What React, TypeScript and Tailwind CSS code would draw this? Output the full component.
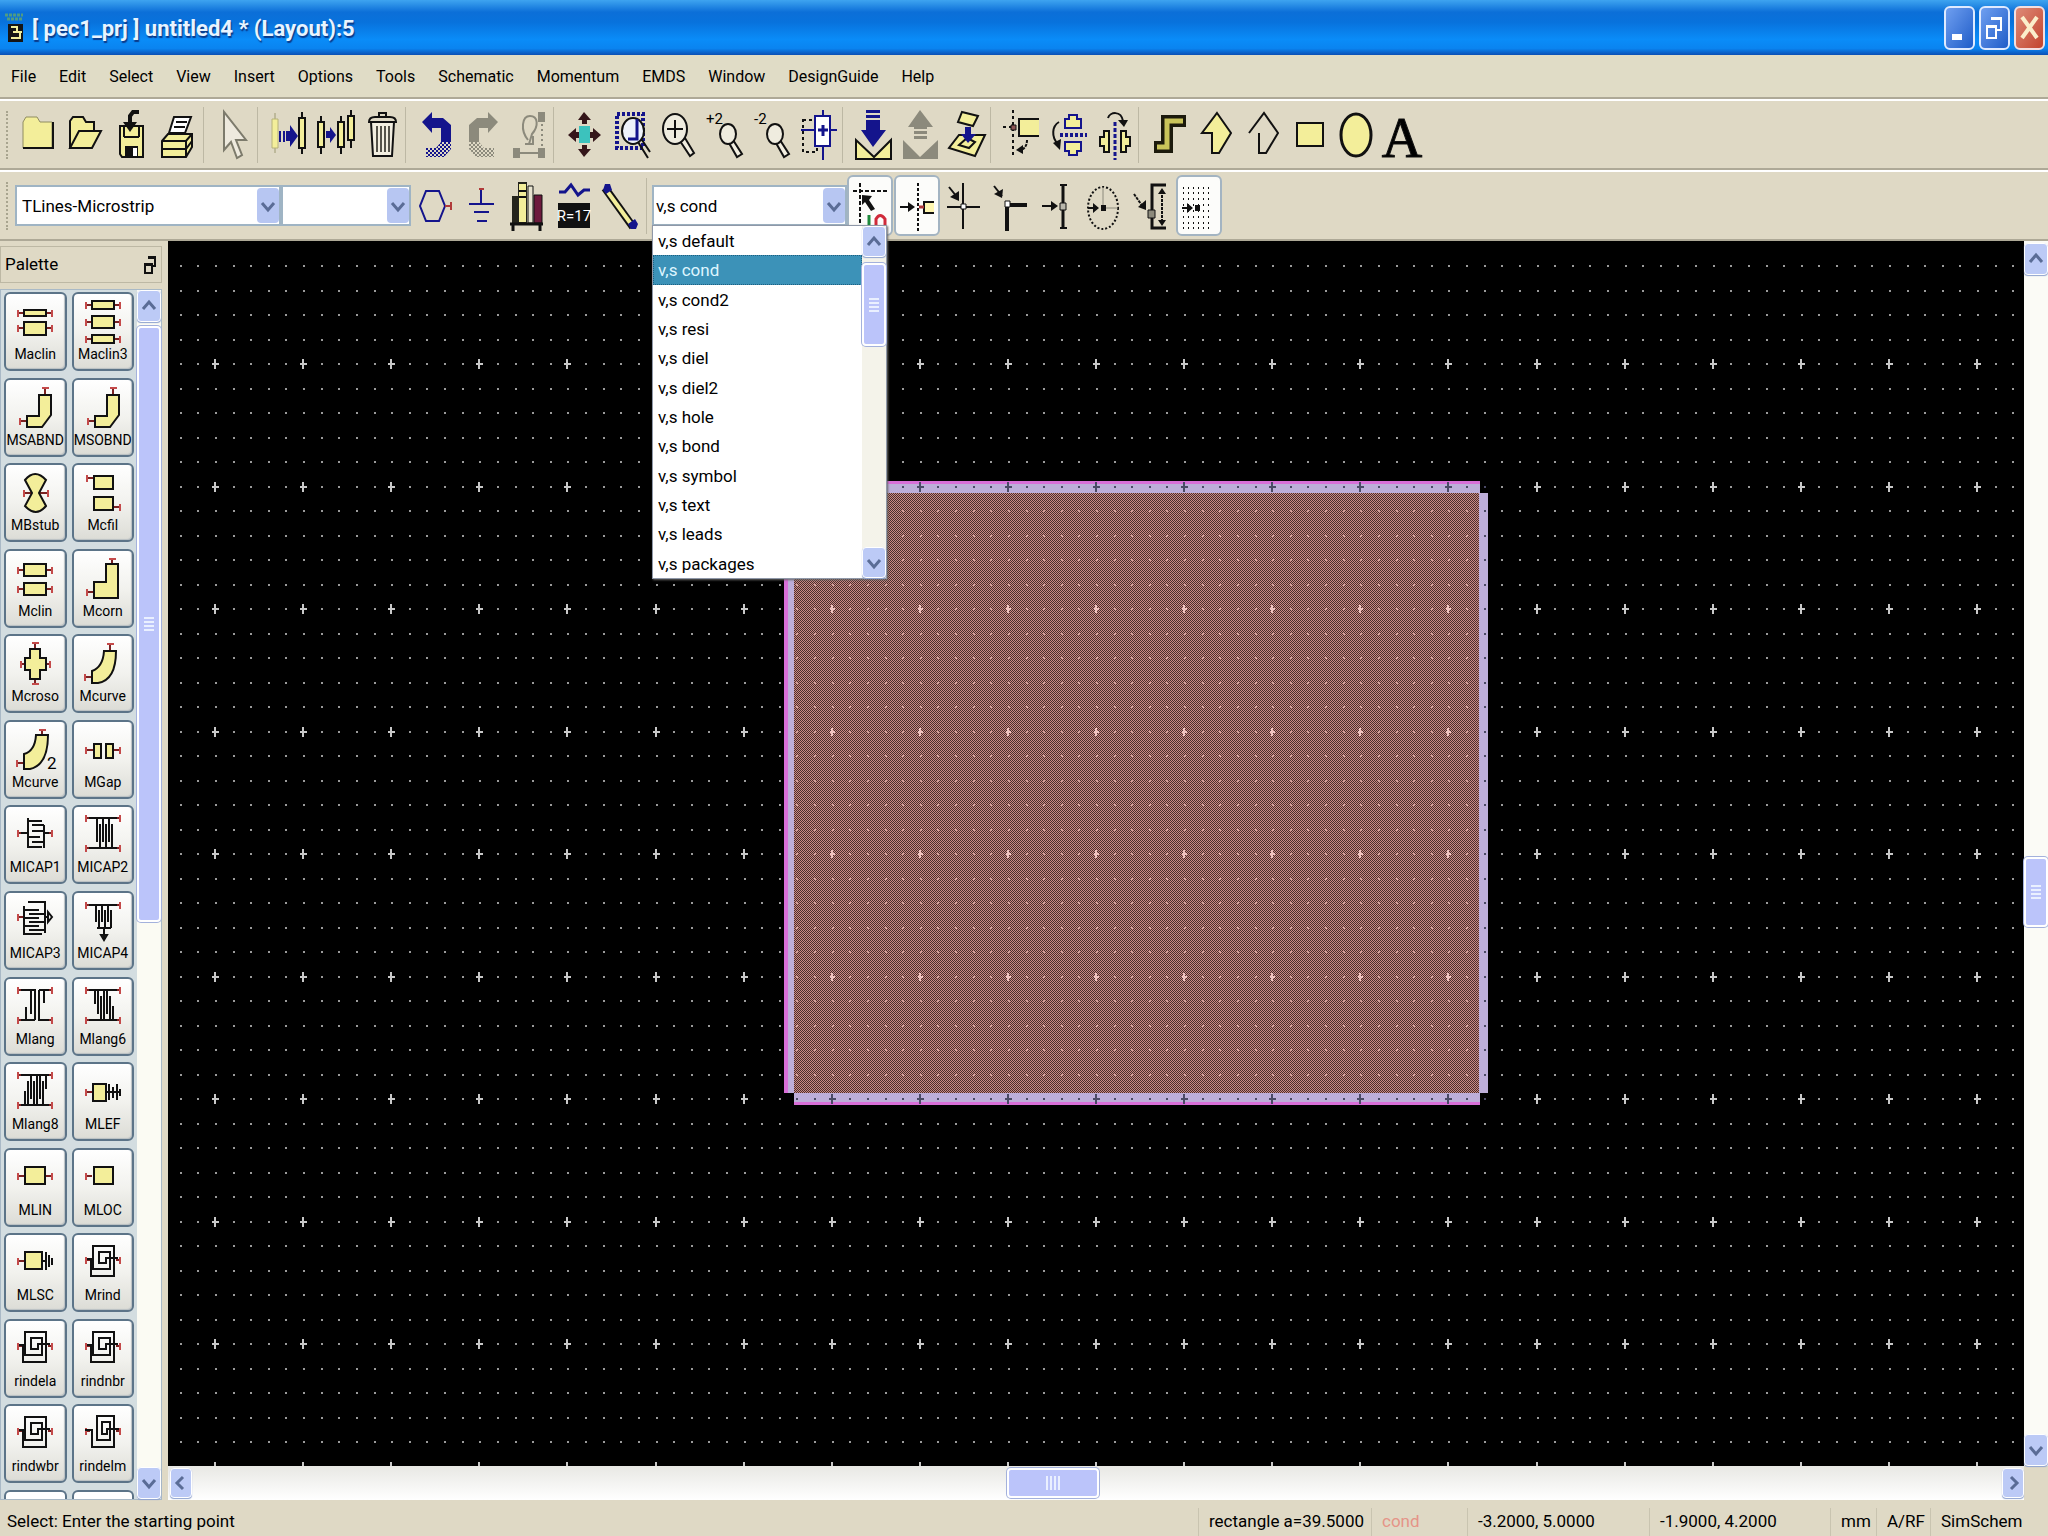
import type { ReactNode } from "react";
import clsx from "clsx";

const menus = [
  "File",
  "Edit",
  "Select",
  "View",
  "Insert",
  "Options",
  "Tools",
  "Schematic",
  "Momentum",
  "EMDS",
  "Window",
  "DesignGuide",
  "Help",
];

const layers = [
  "default",
  "cond",
  "cond2",
  "resi",
  "diel",
  "diel2",
  "hole",
  "bond",
  "symbol",
  "text",
  "leads",
  "packages",
];

const Y = "#f3ee9a";
const NAVY = "#14148c";
const GREY = "#8c8a7c";

/* ---------- main toolbar icons, drawn on a 40x50 grid ---------- */

const ink = { fill: "none", stroke: "#111", strokeWidth: 2 };

const mainGroups: { label: string; icon: ReactNode }[][] = [
  [
    {
      label: "New",
      icon: (
        <>
          <path d="M4 38V12l3-5h11l3 5h12v26z" fill={Y} stroke="#8f8c60" strokeWidth={1} />
          <path d="M4 38h30V12" {...ink} />
        </>
      ),
    },
    {
      label: "Open",
      icon: <path d="M4 38V11l3-4h10l3 5h8v9M4 38l9-17h22l-9 17z" {...ink} fill={Y} />,
    },
    {
      label: "Save",
      icon: (
        <>
          <path d="M7 16h23v31H9l-2-3z" {...ink} fill={Y} />
          <path d="M11 27h15M11 16v11M26 16v11" {...ink} />
          <path d="M12 36h13v11H12z" fill="#111" />
          <path d="M20 38h4v8h-4z" fill="#fff" />
          <path d="M26 2h-6l-3 4v8" {...ink} strokeWidth={4} />
          <path d="M10 12h14l-7 10z" fill="#111" />
        </>
      ),
    },
    {
      label: "Print",
      icon: (
        <>
          <path d="M2 31l6-7h24v13l-6 10H2z" {...ink} fill={Y} />
          <path d="M9 23l5-16h17l-6 16z" {...ink} fill="#fff" />
          <path d="M16 12h11M14 17h11M2 31h24l6-7M26 31v16M2 39h24l6-8" {...ink} />
        </>
      ),
    },
  ],
  [
    {
      label: "Select",
      icon: (
        <path
          d="M10 2v38l7-8 6 16 5-3-6-15h10z"
          fill="#eeeade"
          stroke="#7d7b6c"
          strokeWidth={2}
        />
      ),
    },
  ],
  [
    {
      label: "Copy",
      icon: (
        <>
          <path d="M7 3v40" stroke="#9b9870" strokeWidth={1} />
          <path d="M4 9h6v29H4z" fill={Y} stroke="#b6b27a" />
          <path d="M12 21v11M16 21v11" stroke={NAVY} strokeWidth={2} />
          <path d="M18 21h4v-6l8 11-8 11v-6h-4z" fill={NAVY} />
          <path d="M34 2v42" {...ink} />
          <path d="M31 8h6v30h-6z" {...ink} fill={Y} />
        </>
      ),
    },
    {
      label: "Move",
      icon: (
        <>
          <path d="M6 6v38M26 6v38M36 0v38" {...ink} />
          <path d="M3 12h6v25H3zM23 12h6v25h-6zM33 6h6v24h-6z" {...ink} fill={Y} />
          <path d="M11 21h4v-4l6 8-6 8v-5h-4z" fill={NAVY} />
        </>
      ),
    },
    {
      label: "Delete",
      icon: (
        <>
          <path d="M9 12h23l-2 34H11z" {...ink} fill="#f2eee0" />
          <path d="M7 12q0-5 6-5h15q6 0 6 5zM17 6V3h7v3" {...ink} />
          <path d="M15 16v26M19 16v26M23 16v26M27 16v26" stroke="#55534a" strokeWidth={2} />
        </>
      ),
    },
  ],
  [
    {
      label: "Undo",
      icon: (
        <>
          <path d="M6 12L16 2v6h11l8 7v17H25V18h-9v5z" fill={NAVY} />
          <path d="M25 32h10v7l-7 8H10v-9h10z" fill="url(#navyDots)" />
        </>
      ),
    },
    {
      label: "Redo",
      icon: (
        <>
          <path d="M35 12L25 2v6H14l-8 7v17h10V18h9v5z" fill={GREY} />
          <path d="M16 32H6v7l7 8h18v-9H21z" fill="url(#greyDots)" />
        </>
      ),
    },
    {
      label: "Rotate",
      icon: (
        <>
          <path d="M18 30c-8-10-6-24 2-24s9 10 2 18l-3 10M15 34h8v-8" fill="none" stroke={GREY} strokeWidth={2} />
          <path d="M28 2h7v10h-7zM3 38h7v10H3zM28 38h7v10h-7z" fill={GREY} />
          <path d="M10 43h18" stroke={GREY} strokeWidth={2} />
          <path d="M32 14v22" stroke={GREY} strokeWidth={2} strokeDasharray="2 3" />
        </>
      ),
    },
  ],
  [
    {
      label: "View all",
      icon: (
        <>
          <path d="M15 16h11v17H15z" fill="#3cc2bd" />
          <path
            d="M20 2l-6 8h4v4h5v-4h4zM20 47l-6-8h4v-4h5v4h4zM4 25l8-7v4h3v6h-3v4zM37 25l-8-7v4h-3v6h3v4z"
            fill="#35161a"
          />
        </>
      ),
    },
    {
      label: "Zoom area",
      icon: (
        <>
          <path d="M6 4h26v34H6z" fill="none" stroke={NAVY} strokeWidth={4} strokeDasharray="3 2" />
          <ellipse cx="22" cy="21" rx="11" ry="13" fill="#eef2fb" stroke="#111" strokeWidth={2} />
          <path d="M26 9v20h-9" fill="none" stroke={NAVY} strokeWidth={3} />
          <path d="M27 32l10 16M31 30l8 12" {...ink} />
        </>
      ),
    },
    {
      label: "Zoom in",
      icon: (
        <>
          <path d="M22 31l10 15 4-3-9-15z" {...ink} fill="#f2eee0" />
          <ellipse cx="17" cy="19" rx="12" ry="15" {...ink} fill="#efecdf" />
          <path d="M17 10v18M9 19h16" {...ink} />
        </>
      ),
    },
    {
      label: "Zoom in by 2",
      icon: (
        <>
          <path d="M24 33l8 14 5-3-9-14z" {...ink} fill="#f2eee0" />
          <ellipse cx="23" cy="24" rx="8" ry="10" {...ink} fill="#efecdf" />
          <text x="1" y="14" fontSize="15">+2</text>
        </>
      ),
    },
    {
      label: "Zoom out by 2",
      icon: (
        <>
          <path d="M24 33l8 14 5-3-9-14z" {...ink} fill="#f2eee0" />
          <ellipse cx="23" cy="24" rx="8" ry="10" {...ink} fill="#efecdf" />
          <text x="2" y="14" fontSize="15">-2</text>
        </>
      ),
    },
    {
      label: "Pan",
      icon: (
        <>
          <path d="M4 10h14v32H4z" {...ink} strokeDasharray="3 3" />
          <path d="M24 0v50M2 20h36" stroke={NAVY} strokeWidth={2} />
          <path d="M16 6h15v30H16z" fill="#fff" stroke={NAVY} strokeWidth={2} />
          <path d="M24 15v11M19 20h10" stroke={NAVY} strokeWidth={3} />
        </>
      ),
    },
  ],
  [
    {
      label: "Push into",
      icon: (
        <>
          <path d="M3 30v19h35V30l-17 17z" {...ink} fill={Y} />
          <path d="M13 0h14v3H13zM13 5h14v3H13zM13 10h14v10h6L20 37 8 20h5z" fill={NAVY} />
        </>
      ),
    },
    {
      label: "Pop out",
      icon: (
        <>
          <path d="M3 30v19h35V30L20 47z" fill={GREY} />
          <path d="M20 0l13 17h-6v2H14v-2H8zM14 21h13v3H14zM14 26h13v3H14z" fill={GREY} />
        </>
      ),
    },
    {
      label: "Insert component",
      icon: (
        <>
          <path d="M12 25h26L28 46 2 38z" {...ink} fill={Y} />
          <path d="M15 2l16 4-5 10-15-4z" {...ink} fill={Y} />
          <path d="M12 35l8-7 8 4-6 6z" {...ink} />
          <path d="M18 17h6v7h5l-8 9-7-9h4z" fill={NAVY} />
        </>
      ),
    },
  ],
  [
    {
      label: "Rotate on pin",
      icon: (
        <>
          <path d="M12 0v48M2 17h10" {...ink} strokeDasharray="3 3" />
          <path d="M38 9H18v17h20" {...ink} fill={Y} />
          <path d="M10 15h5v5h-5z" fill="#8c5454" stroke="#111" />
          <path d="M26 30c0 6-3 10-8 10" {...ink} strokeDasharray="3 1" />
          <path d="M15 40l7-5v9z" fill="#111" />
        </>
      ),
    },
    {
      label: "Mirror X",
      icon: (
        <>
          <path d="M17 9h4V5h8v4h4v9H17zM17 32h16v9h-4v4h-8v-4h-4z" fill={Y} stroke={NAVY} strokeWidth={2} />
          <path d="M12 25h27" stroke={NAVY} strokeWidth={4} strokeDasharray="3 2" />
          <path d="M11 12c-7 4-8 15-1 22" {...ink} />
          <path d="M5 33l7 7 1-11z" fill="#111" />
        </>
      ),
    },
    {
      label: "Mirror Y",
      icon: (
        <>
          <path d="M9 21h5v21H9v-6H5v-9h4zM26 21h5v6h4v9h-4v6h-5z" fill={Y} stroke="#111" strokeWidth={2} />
          <path d="M20 12v38" stroke={NAVY} strokeWidth={3} strokeDasharray="4 2" />
          <path d="M13 8c2-6 13-8 15 3" {...ink} />
          <path d="M23 10h10l-4 7z" fill="#111" />
        </>
      ),
    },
  ],
  [
    {
      label: "Trace",
      icon: (
        <>
          <path d="M5 37h13V11h19" fill="none" stroke="#1c1a0c" strokeWidth={12} />
          <path d="M8 37h10V11h16" fill="none" stroke="#c9c45a" strokeWidth={5} />
        </>
      ),
    },
    {
      label: "Polygon",
      icon: <path d="M21 3l14 20-12 20h-7V23H6z" {...ink} fill={Y} />,
    },
    {
      label: "Polyline",
      icon: <path d="M6 23L21 3l14 20-12 20h-7V23" {...ink} fill="none" />,
    },
    {
      label: "Rectangle",
      icon: <path d="M7 13h26v23H7z" {...ink} fill={Y} />,
    },
    {
      label: "Circle",
      icon: <ellipse cx="19" cy="25" rx="15" ry="21" {...ink} strokeWidth={3} fill={Y} />,
    },
    {
      label: "Text",
      icon: (
        <text x="18" y="47" fontSize="56" textAnchor="middle" fontFamily="Liberation Serif, serif" stroke="#111">
          A
        </text>
      ),
    },
  ],
];

/* ---------- second toolbar ---------- */

const toolIcons: { label: string; icon: ReactNode }[] = [
  {
    label: "Port",
    icon: (
      <>
        <path d="M11 10h13l6 15-6 15H11L5 25z" fill="none" stroke={NAVY} strokeWidth={2} />
        <path d="M30 25h6M36 21v8" stroke="#b03a3a" strokeWidth={2} />
      </>
    ),
  },
  {
    label: "Ground",
    icon: (
      <>
        <path d="M19 9v14M7 23h25M12 31h15M15 40h10" fill="none" stroke={NAVY} strokeWidth={2} />
        <path d="M17 8h5" stroke="#b03a3a" strokeWidth={2} />
      </>
    ),
  },
  {
    label: "Component library",
    icon: (
      <>
        <path d="M3 15h7v27H3zM9 1h9v41H9z" fill="#24241c" />
        <path d="M10 3h7v38h-7z" fill={Y} />
        <path d="M19 5h5v37h-5z" fill="#e8e4d0" stroke="#111" />
        <path d="M25 14h8v28h-8z" fill="#6d1a3c" stroke="#111" />
        <path d="M1 43h33M4 43v7M31 43v7" {...ink} strokeWidth={3} />
        <path d="M10 10h7M10 16h7" {...ink} />
      </>
    ),
  },
  {
    label: "Edit parameters",
    icon: (
      <>
        <path d="M3 11h6l6-7 7 10 6-5h6" fill="none" stroke={NAVY} strokeWidth={3} />
        <path d="M2 22h32v25H2z" fill="#111" />
        <text x="18" y="40" fontSize="15" textAnchor="middle" fill="#fff">R=17</text>
      </>
    ),
  },
  {
    label: "Draw line",
    icon: (
      <>
        <path d="M2 7L30 46" stroke="#111" strokeWidth={8} />
        <path d="M4 10L28 43" stroke={Y} strokeWidth={4} />
        <path d="M2 3h5l2 6-6 4-3-4zM33 48h-5l-3-5 7-5 3 5z" fill={NAVY} />
      </>
    ),
  },
];

const arrowHead = "M11 12l-1 9-8-4z";

const snapIcons: { label: string; on?: boolean; icon: ReactNode }[] = [
  {
    label: "Snap enabled",
    on: true,
    icon: (
      <>
        <path d="M3 10h34M10 2v46" {...ink} strokeDasharray="4 2" />
        <path d="M12 14l10 1-3 4 6 9-4 2-6-9-3 3z" fill="#111" />
        <path d="M19 34v14" stroke="#1e8a3c" strokeWidth={3} />
        <path d="M26 48V38q4-7 9 0v10" fill="none" stroke="#d02a3a" strokeWidth={3} />
      </>
    ),
  },
  {
    label: "Snap to pin",
    on: true,
    icon: (
      <>
        <path d="M21 2v48" {...ink} strokeDasharray="3 2" />
        <path d="M3 26h12" {...ink} />
        <path d="M11 21l7 5-7 5z" fill="#111" />
        <path d="M37 21H27v11h10" {...ink} fill="#fff6b0" />
        <path d="M22 26h5" stroke="#b03a3a" strokeWidth={3} />
      </>
    ),
  },
  {
    label: "Snap to vertex",
    icon: (
      <>
        <path d="M19 2v46M3 26h33M5 6l8 10" {...ink} />
        <path d="M15 10v10l-9-4z" fill="#111" />
        <path d="M17 23h5v5h-5z" fill="#fff" stroke="#111" />
      </>
    ),
  },
  {
    label: "Snap to edge",
    icon: (
      <>
        <path d="M16 50V24h20" {...ink} strokeWidth={4} />
        <path d="M3 5l8 10" {...ink} />
        <path d={arrowHead} transform="translate(1 -4)" fill="#111" />
        <path d="M14 20h5v6h-5z" fill="#fff" stroke="#111" />
      </>
    ),
  },
  {
    label: "Snap to midpoint",
    icon: (
      <>
        <path d="M25 3v45" {...ink} strokeWidth={3} />
        <path d="M22 4h7M22 47h7M4 25h12" {...ink} />
        <path d="M13 20l7 5-7 5z" fill="#111" />
        <path d="M22 22h6v7h-6z" fill="#b9b7ac" stroke="#111" />
      </>
    ),
  },
  {
    label: "Snap to arc center",
    icon: (
      <>
        <ellipse cx="18" cy="27" rx="15" ry="21" {...ink} strokeDasharray="2 2" />
        <path d="M18 6v21h15" stroke={GREY} fill="none" />
        <path d="M3 27h8" {...ink} />
        <path d="M8 22l6 5-6 5zM16 24h5v6h-5z" fill="#111" />
      </>
    ),
  },
  {
    label: "Snap to intersection",
    icon: (
      <>
        <path d="M34 4H20v43h14" {...ink} strokeWidth={3} />
        <path d="M30 10v32M2 13l9 13" {...ink} strokeDasharray="3 1" />
        <path d="M26 13l4-6 4 6zM26 39l4 6 4-6zM6 26l8-7v10z" fill="#111" />
        <path d="M16 29h7v8h-7z" fill={GREY} stroke="#111" />
      </>
    ),
  },
  {
    label: "Snap to grid",
    on: true,
    icon: (
      <>
        <path
          d="M4 7h30M4 12h30M4 18h30M4 24h30M4 30h30M4 36h30M4 42h30M4 47h30"
          {...ink}
          strokeDasharray="1 4"
        />
        <path d="M3 27h8" {...ink} />
        <path d="M8 22l6 5-6 5zM16 24h5v6h-5z" fill="#111" />
      </>
    ),
  },
];

/* ---------- palette icons ---------- */

type Pt = [number, number];

// stub from the body out to a red bar at the free end
const Pin = ({ at, to }: { at: Pt; to: Pt }) => {
  const horizontal = at[1] === to[1];
  return (
    <g fill="none" strokeWidth={2}>
      <path d={`M${at[0]} ${at[1]}L${to[0]} ${to[1]}`} stroke="#7a2222" />
      <path
        d={horizontal ? `M${at[0]} ${at[1] - 3}v7` : `M${at[0] - 3} ${at[1]}h7`}
        stroke="#c44a4a"
      />
    </g>
  );
};

const Body = ({ d }: { d: string }) => <path d={d} fill={Y} stroke="#111" strokeWidth={2} />;
const Wire = ({ d }: { d: string }) => <path d={d} fill="none" stroke="#111" strokeWidth={2} />;

const Bend = ({ d, dx = 0 }: { d: string; dx?: number }) => (
  <g transform={`translate(${dx} 0)`}>
    <Pin at={[41, 10]} to={[41, 18]} />
    <Pin at={[16, 43]} to={[23, 43]} />
    <Body d={d} />
  </g>
);

const Comb = ({ d }: { d: string }) => (
  <>
    <Pin at={[14, 13]} to={[18, 13]} />
    <Pin at={[48, 13]} to={[44, 13]} />
    <Pin at={[14, 43]} to={[18, 43]} />
    <Pin at={[48, 43]} to={[44, 43]} />
    <Wire d={d} />
  </>
);

const Spiral = ({ narrow = false }: { narrow?: boolean }) => (
  <>
    <Pin at={[14, 27]} to={[18, 27]} />
    <Pin at={[48, 27]} to={[44, 27]} />
    <Wire
      d={
        narrow
          ? "M13 26h7v17h22V12H25v24h13V18h-8v12h5v-5h12"
          : "M15 26h4v17h23V13H21v23h17V19H27v11h7v-5h12"
      }
    />
  </>
);

const paletteItems: { name: string; icon: ReactNode }[] = [
  {
    name: "Maclin",
    icon: (
      <>
        <Pin at={[14, 21]} to={[19, 21]} />
        <Pin at={[48, 21]} to={[43, 21]} />
        <Pin at={[14, 36]} to={[19, 36]} />
        <Pin at={[48, 36]} to={[43, 36]} />
        <Body d="M20 18h22v6H20zM20 30h22v13H20z" />
      </>
    ),
  },
  {
    name: "Maclin3",
    icon: (
      <>
        {[13, 30, 47].map((y) => (
          <g key={y}>
            <Pin at={[14, y]} to={[19, y]} />
            <Pin at={[48, y]} to={[43, y]} />
          </g>
        ))}
        <Body d="M20 9h22v8H20zM20 24h22v12H20zM20 43h22v8H20z" />
      </>
    ),
  },
  { name: "MSABND", icon: <Bend d="M23 38h12V17h12v20L38 49H23z" /> },
  { name: "MSOBND", icon: <Bend d="M23 38h12V17h12v20L38 49H23z" /> },
  {
    name: "MBstub",
    icon: (
      <>
        <Pin at={[20, 30]} to={[27, 30]} />
        <Pin at={[44, 30]} to={[35, 30]} />
        <Body d="M28 30l-7-13q10-12 21 0l-7 13 7 13q-10 12-21 0z" />
      </>
    ),
  },
  {
    name: "Mcfil",
    icon: (
      <>
        <Pin at={[15, 15]} to={[21, 15]} />
        <Pin at={[48, 44]} to={[42, 44]} />
        <Body d="M22 13h19v13H22zM22 34h19v13H22z" />
      </>
    ),
  },
  {
    name: "Mclin",
    icon: (
      <>
        {[21, 40].map((y) => (
          <g key={y}>
            <Pin at={[14, y]} to={[19, y]} />
            <Pin at={[48, y]} to={[43, y]} />
          </g>
        ))}
        <Body d="M20 15h22v12H20zM20 34h22v12H20z" />
      </>
    ),
  },
  { name: "Mcorn", icon: <Bend dx={-1} d="M23 33h12V15h12v34H23z" /> },
  {
    name: "Mcroso",
    icon: (
      <>
        <Pin at={[31, 9]} to={[31, 15]} />
        <Pin at={[31, 50]} to={[31, 44]} />
        <Pin at={[17, 30]} to={[21, 30]} />
        <Pin at={[46, 30]} to={[41, 30]} />
        <Body d="M26 15h10v9h6v12h-6v9H26v-9h-5V24h5z" />
      </>
    ),
  },
  { name: "Mcurve", icon: <Bend dx={-3} d="M23 37q11-4 12-20h12q0 29-18 32h-6z" /> },
  {
    name: "Mcurve",
    icon: (
      <>
        <Bend dx={-3} d="M23 34q11-3 12-19h12q0 30-18 34h-6z" />
        <text x="43" y="49" fontSize="17">2</text>
      </>
    ),
  },
  {
    name: "MGap",
    icon: (
      <>
        <Pin at={[14, 30]} to={[21, 30]} />
        <Pin at={[48, 30]} to={[42, 30]} />
        <Body d="M22 24h7v14h-7zM34 24h7v14h-7z" />
      </>
    ),
  },
  {
    name: "MICAP1",
    icon: (
      <>
        <Pin at={[14, 28]} to={[23, 28]} />
        <Pin at={[48, 28]} to={[40, 28]} />
        <Wire d="M24 13v30M24 16h14M24 32h12M24 42h14M40 43V20M40 20H28M40 26H28M40 37H28M17 28h7M40 28h5" />
      </>
    ),
  },
  {
    name: "MICAP2",
    icon: <Comb d="M17 13h28M17 43h28M25 13v24M31 13v24M37 13v24M28 43V19M34 43V19M40 43V19" />,
  },
  {
    name: "MICAP3",
    icon: (
      <>
        <Pin at={[14, 26]} to={[19, 26]} />
        <Wire d="M20 15v28h18M20 19h15M20 27h15M20 35h15M41 42V11H24M41 23H25M41 31H25M41 39H25M41 26h3M44 21v10l4-5z" />
      </>
    ),
  },
  {
    name: "MICAP4",
    icon: (
      <>
        <Pin at={[14, 14]} to={[18, 14]} />
        <Pin at={[48, 14]} to={[44, 14]} />
        <Wire d="M17 14h28M24 14v17M30 14v17M36 14v17M27 37V19M33 37V19M39 37V19M25 37h14M32 37v12M29 44h6l-3 5z" />
      </>
    ),
  },
  {
    name: "Mlang",
    icon: <Comb d="M17 13h14v30M17 43h14M27 13v24M22 43V30M45 43H35V13M35 13h10M40 13v13" />,
  },
  {
    name: "Mlang6",
    icon: <Comb d="M17 13h28M17 43h28M23 13v14M26 13v24M29 19v24M32 13v30M35 13v24M38 19v24M41 29v14" />,
  },
  {
    name: "Mlang8",
    icon: <Comb d="M17 13h28M17 43h28M21 29v14M24 19v24M27 13v24M30 19v24M33 13v30M36 13v24M39 19v24M42 13v14" />,
  },
  {
    name: "MLEF",
    icon: (
      <>
        <Pin at={[14, 30]} to={[20, 30]} />
        <Body d="M21 22h13v17H21z" />
        <Wire d="M34 30h15M37 22v16M41 25v11M45 22v16M48 27v7" />
      </>
    ),
  },
  {
    name: "MLIN",
    icon: (
      <>
        <Pin at={[14, 28]} to={[20, 28]} />
        <Pin at={[48, 28]} to={[42, 28]} />
        <Body d="M21 19h20v17H21z" />
      </>
    ),
  },
  {
    name: "MLOC",
    icon: (
      <>
        <Pin at={[14, 28]} to={[20, 28]} />
        <Body d="M22 19h19v17H22z" />
      </>
    ),
  },
  {
    name: "MLSC",
    icon: (
      <>
        <Pin at={[14, 28]} to={[20, 28]} />
        <Body d="M21 19h17v17H21z" />
        <Wire d="M38 28h4M42 19v18M45 22v12M48 25v7" />
      </>
    ),
  },
  { name: "Mrind", icon: <Spiral /> },
  { name: "rindela", icon: <Spiral /> },
  { name: "rindnbr", icon: <Spiral /> },
  { name: "rindwbr", icon: <Spiral /> },
  { name: "rindelm", icon: <Spiral narrow /> },
];

const paletteRows = Array.from({ length: 14 }, (_, i) => paletteItems.slice(i * 2, i * 2 + 2));

const paletteTile =
  "min-w-0 flex-1 rounded-md border-2 border-[#5c7488] bg-linear-to-b from-white via-[#f2f2ee] to-[#dcdcd6] shadow-[inset_-1px_-1px_1px_#b9bfc2]";

/* ---------- shared bits ---------- */

const chevrons = {
  up: "M4 12l6-7 6 7",
  down: "M4 6l6 7 6-7",
  left: "M12 3L6 9l6 6",
  right: "M8 3l6 6-6 6",
};

const Chevron = ({ dir }: { dir: keyof typeof chevrons }) => (
  <svg viewBox="0 0 20 18" className="h-[22px] w-5" aria-hidden="true">
    <path d={chevrons[dir]} fill="none" stroke="#5a6c96" strokeWidth={3} />
  </svg>
);

const ScrollButton = ({ dir, className }: { dir: keyof typeof chevrons; className?: string }) => (
  <button
    aria-label={`Scroll ${dir}`}
    className={clsx(
      "flex shrink-0 items-center justify-center rounded-sm border border-white bg-[#bccaf6] shadow-[0_1px_1px_#8fa3cf]",
      className,
    )}
  >
    <Chevron dir={dir} />
  </button>
);

const Thumb = ({ className, vertical = true }: { className?: string; vertical?: boolean }) => (
  <div
    className={clsx(
      "flex shrink-0 items-center justify-center gap-[2px] rounded-sm border-2 border-white bg-[#bbc4fa] shadow-[0_0_0_1px_#a3b1dc]",
      vertical && "flex-col",
      className,
    )}
  >
    {[0, 1, 2, 3].map((i) => (
      <span key={i} className={vertical ? "h-[2px] w-[10px] bg-[#eaf0ff]" : "h-[14px] w-[2px] bg-[#eaf0ff]"} />
    ))}
  </div>
);

const Icon = ({ children }: { children: ReactNode }) => (
  <svg viewBox="0 0 40 50" className="h-[50px] w-10 shrink-0 overflow-visible" aria-hidden="true">
    {children}
  </svg>
);

const Grip = () => (
  <div className="mr-[6px] h-12 w-[3px] shrink-0 border-l-2 border-dotted border-[#a8a48f]" />
);

const ComboArrow = () => (
  <span className="pointer-events-none absolute top-[3px] right-[2px] bottom-[3px] flex w-[22px] items-center justify-center rounded-sm bg-[#b7c6f2]">
    <Chevron dir="down" />
  </span>
);

const Combo = ({ label, value, className }: { label: string; value: string; className: string }) => (
  <div className={clsx("relative h-[41px] shrink-0", className)}>
    <select
      aria-label={label}
      defaultValue={value}
      className="h-full w-full appearance-none border-2 border-[#9fb4c4] bg-white pt-[2px] pr-6 pl-[5px] text-[17px] text-black outline-none"
    >
      <option>{value}</option>
    </select>
    <ComboArrow />
  </div>
);

/* ---------- drawing area ---------- */

// minor dots every fifth of a major cell, crosses on the major cells
const STEP_X = 17.62;
const STEP_Y = 24.5;
const shape = { x: 625, y: 252, w: 686, h: 600 };

const grid = { dots: "", inner: "", edge: "", cross: "", innerCross: "" };
for (let row = -4; row < 60; row++) {
  const y = Math.round(123 + row * STEP_Y);
  for (let col = -2; col < 140; col++) {
    const x = Math.round(47 + col * STEP_X);
    const inside = x > shape.x && x < shape.x + shape.w && y > shape.y && y < shape.y + shape.h;
    const onEdge =
      !inside &&
      x >= shape.x - 9 &&
      x <= shape.x + shape.w + 9 &&
      y >= shape.y - 12 &&
      y <= shape.y + shape.h + 12;
    const major = row % 5 === 0 && col % 5 === 0;
    if (major) {
      const d = `M${x - 3} ${y}h7M${x} ${y - 5}v10`;
      if (inside) grid.innerCross += `M${x - 2} ${y}h5M${x} ${y - 4}v8`;
      else if (onEdge) grid.edge += d;
      else grid.cross += d;
    } else if (inside) grid.inner += `M${x} ${y}h2`;
    else if (onEdge) grid.edge += `M${x} ${y}h2`;
    else grid.dots += `M${x} ${y}h2`;
  }
}

const Canvas = () => (
  <svg className="h-full min-w-0 flex-1 bg-black" role="img" aria-label="Layout canvas">
    <defs>
      <pattern id="hatch" width="2" height="2" patternUnits="userSpaceOnUse">
        <path d="M0 0h2v2H0z" fill="#4a2f2d" />
        <path d="M0 0h1v1H0zM1 1h1v1H1z" fill="#cc8a85" />
      </pattern>
    </defs>
    <path d={grid.dots} stroke="#9a9a9a" strokeWidth={2} />
    <path d={grid.cross} stroke="#c8c8c8" strokeWidth={2} />
    {/* outline bars */}
    <path d="M617 240h695v4H617zM616 244h4v608h-4zM626 860h686v4H626z" fill="#d86fd8" />
    <path d="M617 243h695v9H617zM620 252h6v600h-6zM1311 252h9v600h-9zM626 852h686v9H626z" fill="#bdaed9" />
    <path d={grid.edge} stroke="#4b4a66" strokeWidth={2} />
    <rect x={shape.x + 1} y={shape.y} width={shape.w - 1} height={shape.h} fill="url(#hatch)" />
    <path d={grid.inner} stroke="#cf9c97" strokeWidth={2} />
    <path d={grid.innerCross} stroke="#f0c4c0" strokeWidth={2} />
  </svg>
);

/* ---------- chrome ---------- */

const TitleBar = () => (
  <header className="flex h-[55px] shrink-0 items-center bg-[linear-gradient(#3ea4f0_0%,#0c6fd8_22%,#0872dc_40%,#0a8cf8_72%,#0a84f0_88%,#0b4fb4_100%)] pr-[3px] pl-[5px]">
    <svg viewBox="0 0 20 34" className="h-[34px] w-5" aria-hidden="true">
      <path d="M0 4h18M2 8h16" stroke="#4f9b84" strokeWidth={3} strokeDasharray="3 1" />
      <path d="M3 13h15v18H3z" fill="#151515" />
      <path d="M6 16h6v5h5M8 21h7v6H6" fill="none" stroke="#f0ee9a" strokeWidth={2} />
    </svg>
    <h1 className="ml-[7px] flex-1 pt-[2px] text-[22px] font-bold whitespace-pre text-[#e8f4ff] [text-shadow:1px_2px_1px_#0a3a8a]">
      [ pec1_prj ] untitled4 * (Layout):5
    </h1>
    <div className="flex gap-1">
      <button aria-label="Minimize" className="h-11 w-[31px] rounded-md border-2 border-[#dfeaff] bg-linear-to-br from-[#6f9ff0] to-[#1e5cc8]">
        <svg viewBox="0 0 27 40" className="h-full w-full">
          <path d="M6 26h10v6H6z" fill="#fff" />
        </svg>
      </button>
      <button aria-label="Restore" className="h-11 w-[31px] rounded-md border-2 border-[#dfeaff] bg-linear-to-br from-[#6f9ff0] to-[#1e5cc8]">
        <svg viewBox="0 0 27 40" className="h-full w-full">
          <path d="M10 10h10v12h-4M6 18h9v12H6zM10 11h10M6 19h9" fill="none" stroke="#fff" strokeWidth={2} />
        </svg>
      </button>
      <button aria-label="Close" className="h-11 w-[31px] rounded-md border-2 border-[#f3dfe0] bg-linear-to-br from-[#dd8a78] to-[#c2432c]">
        <svg viewBox="0 0 27 40" className="h-full w-full">
          <path d="M6 9l15 21M21 9L6 30" stroke="#fbeecb" strokeWidth={4} />
        </svg>
      </button>
    </div>
  </header>
);

const MenuBar = () => (
  <nav className="flex h-[44px] shrink-0 items-center gap-[23px] border-b-2 border-[#aea997] bg-[#e0dcc6] pt-[2px] pl-[11px] text-[16px]">
    {menus.map((m) => (
      <button key={m}>{m}</button>
    ))}
  </nav>
);

const MainToolbar = () => (
  <div
    className="flex h-[71px] shrink-0 items-center border-t-2 border-b-2 border-t-white border-b-[#aea997] pl-[6px]"
    role="toolbar"
    aria-label="Main"
  >
    <Grip />
    {mainGroups.map((group, i) => (
      <div key={i} className="flex items-center">
        {i > 0 && <div className="mr-[6px] h-14 w-px bg-[#bdb8a4]" />}
        {group.map((t) => (
          <button key={t.label} aria-label={t.label} className="flex w-[47px] justify-center">
            <Icon>{t.icon}</Icon>
          </button>
        ))}
      </div>
    ))}
  </div>
);

const LayerCombo = () => (
  <div className="relative z-10 h-[41px] w-[195px] shrink-0">
    <select
      aria-label="Layer"
      defaultValue="v,s cond"
      className="h-full w-full appearance-none border-2 border-[#9fb4c4] bg-white pt-[2px] pl-[2px] text-[17px] text-black outline-none"
    >
      {layers.map((l) => (
        <option key={l}>{`v,s ${l}`}</option>
      ))}
    </select>
    <ComboArrow />
    <div className="absolute top-10 left-0 flex h-[354px] w-[235px] border border-[#8f98a8] bg-white shadow-[1px_1px_2px_#666]">
      <ul role="listbox" aria-label="Layers" className="flex flex-1 flex-col text-[17px]">
        {layers.map((l) => (
          <li
            key={l}
            role="option"
            aria-selected={l === "cond"}
            className={clsx(
              "flex flex-1 items-center border pt-[2px] pl-[4px] leading-none",
              l === "cond"
                ? "border-dotted border-[#1d5f80] bg-[#3c92b8] text-[#dff6ff]"
                : "border-transparent",
            )}
          >
            {`v,s ${l}`}
          </li>
        ))}
      </ul>
      <div className="flex w-6 flex-col bg-[#f4f3ea]">
        <ScrollButton dir="up" className="h-[31px]" />
        <Thumb className="mt-[6px] h-[83px]" />
        <div className="flex-1" />
        <ScrollButton dir="down" className="h-[31px]" />
      </div>
    </div>
  </div>
);

const ComponentToolbar = () => (
  <div
    className="flex h-[71px] shrink-0 items-center border-t-2 border-b-2 border-t-white border-b-[#aea997] pl-[6px]"
    role="toolbar"
    aria-label="Components and snapping"
  >
    <Grip />
    <Combo label="Palette" value="TLines-Microstrip" className="w-[266px]" />
    <Combo label="Component history" value="" className="w-[130px]" />
    {toolIcons.map((t) => (
      <button key={t.label} aria-label={t.label} className="flex w-[47px] justify-center">
        <Icon>{t.icon}</Icon>
      </button>
    ))}
    <div className="mr-[5px] h-14 w-px bg-[#bdb8a4]" />
    <LayerCombo />
    {snapIcons.map((t) => (
      <button
        key={t.label}
        aria-label={t.label}
        aria-pressed={!!t.on}
        className={clsx(
          "mr-px flex h-[61px] w-[46px] items-center justify-center",
          t.on && "rounded-md border-2 border-[#a3b4c2] bg-[#fcfcfa]",
        )}
      >
        <Icon>{t.icon}</Icon>
      </button>
    ))}
  </div>
);

const Palette = () => (
  <aside className="flex w-[168px] shrink-0 flex-col pt-[5px] pr-[6px]">
    <div className="mb-[6px] flex h-[37px] shrink-0 items-center justify-between border border-[#bdb8a4] pr-[5px] pl-1">
      <h2 className="text-[17px]">Palette</h2>
      <button aria-label="Undock">
        <svg viewBox="0 0 12 18" className="h-[18px] w-3">
          <path d="M4 1h7v9H8M1 8h7v9H1zM4 2h7M1 9h7" fill="none" stroke="#111" strokeWidth={2} />
        </svg>
      </button>
    </div>
    <div className="flex min-h-0 flex-1 border border-[#a9b9c6] bg-[#d3dde0]">
      <div className="flex min-w-0 flex-1 flex-col justify-between overflow-hidden px-[3px] pt-[2px]">
        {paletteRows.map((row, i) => (
          <div key={i} className="flex gap-[5px]">
            {row.map((p, j) => (
              <button key={j} className={clsx("flex h-[79px] flex-col items-center", paletteTile)}>
                <svg viewBox="2 2 58 52" className="h-[52px] w-[58px] shrink-0" aria-hidden="true">
                  {p.icon}
                </svg>
                <span className="text-[14px] leading-4">{p.name}</span>
              </button>
            ))}
          </div>
        ))}
        <div className="flex gap-[5px] overflow-hidden">
          <div className="h-[9px] flex-1 rounded-t-md border-2 border-b-0 border-[#5c7488] bg-white" />
          <div className="h-[9px] flex-1 rounded-t-md border-2 border-b-0 border-[#5c7488] bg-white" />
        </div>
      </div>
      <div className="flex w-6 shrink-0 flex-col bg-[#fbfbf3]">
        <ScrollButton dir="up" className="h-8" />
        <Thumb className="mt-1 h-[596px]" />
        <div className="flex-1" />
        <ScrollButton dir="down" className="h-8" />
      </div>
    </div>
  </aside>
);

const statusCell = "flex h-full shrink-0 items-center border-l border-[#c9c4b0] pl-[10px] whitespace-nowrap";

const StatusBar = () => (
  <footer className="flex h-9 shrink-0 items-center pt-2 text-[17px]">
    <p className="flex-1 pl-[7px]">Select: Enter the starting point</p>
    <div className={clsx(statusCell, "w-[173px]")}>rectangle a=39.5000</div>
    <div className={clsx(statusCell, "w-24 text-[#e59488]")}>cond</div>
    <div className={clsx(statusCell, "w-[182px]")}>-3.2000, 5.0000</div>
    <div className={clsx(statusCell, "w-[181px]")}>-1.9000, 4.2000</div>
    <div className={clsx(statusCell, "w-[46px]")}>mm</div>
    <div className={clsx(statusCell, "w-[54px]")}>A/RF</div>
    <div className={clsx(statusCell, "w-[118px]")}>SimSchem</div>
  </footer>
);

const App = () => {
  return (
    <div className="flex h-screen flex-col overflow-hidden bg-[#dfd9c5] font-[Roboto,'Liberation_Sans',sans-serif] text-black">
      <svg className="absolute h-0 w-0" aria-hidden="true">
        <defs>
          <pattern id="navyDots" width="4" height="4" patternUnits="userSpaceOnUse">
            <path d="M0 0h2v2H0zM2 2h2v2H2z" fill={NAVY} />
          </pattern>
          <pattern id="greyDots" width="4" height="4" patternUnits="userSpaceOnUse">
            <path d="M0 0h2v2H0zM2 2h2v2H2z" fill={GREY} />
          </pattern>
        </defs>
      </svg>
      <TitleBar />
      <MenuBar />
      <MainToolbar />
      <ComponentToolbar />
      <div className="flex min-h-0 flex-1">
        <Palette />
        <main className="flex min-w-0 flex-1 flex-col">
          <div className="flex min-h-0 flex-1">
            <Canvas />
            <div className="flex w-6 shrink-0 flex-col bg-[#fbfbf6]">
              <ScrollButton dir="up" className="mt-[2px] h-8" />
              <div className="flex-[583]" />
              <Thumb className="h-[70px]" />
              <div className="flex-[507]" />
              <ScrollButton dir="down" className="h-8" />
            </div>
          </div>
          <div className="mr-6 flex h-[34px] shrink-0 bg-linear-to-b from-[#e8e8e4] to-white py-[2px]">
            <ScrollButton dir="left" className="ml-[2px] w-[22px]" />
            <div className="flex-[814]" />
            <Thumb vertical={false} className="w-[92px]" />
            <div className="flex-[901]" />
            <ScrollButton dir="right" className="w-[22px]" />
          </div>
        </main>
      </div>
      <StatusBar />
    </div>
  );
};

export default App;
